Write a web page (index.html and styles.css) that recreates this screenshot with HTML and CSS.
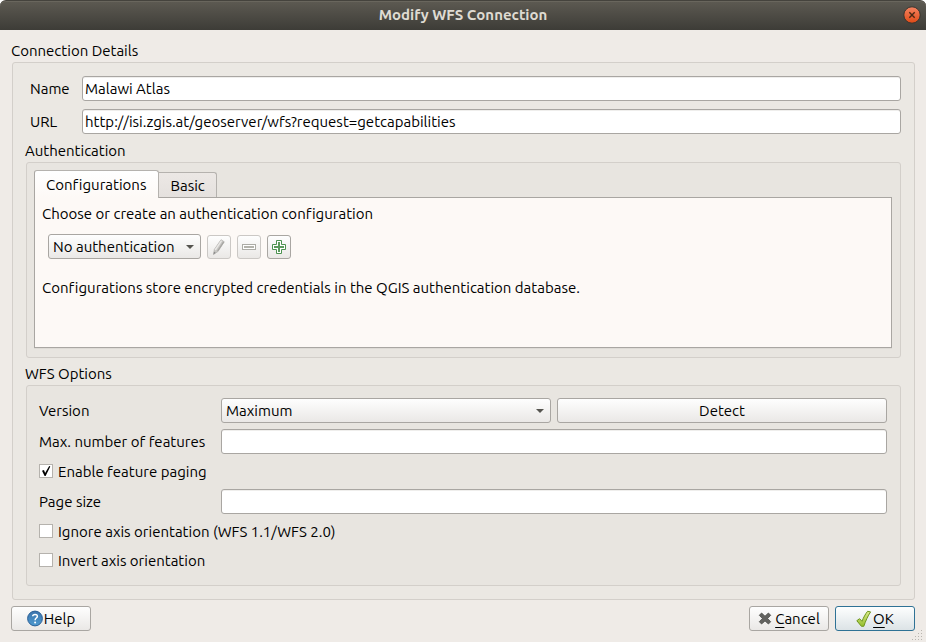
FILE: index.html
```html
<!DOCTYPE html>
<html lang="en">
<head>
<meta charset="utf-8">
<title>Modify WFS Connection</title>
<link rel="stylesheet" href="styles.css">
</head>
<body>
<div class="window">
  <header class="titlebar">
    <h1 class="title">Modify WFS Connection</h1>
    <button class="close" type="button" aria-label="Close">
      <svg width="18" height="18" viewBox="0 0 18 18" aria-hidden="true">
        <defs><linearGradient id="closeFill" x1="0" y1="0" x2="0" y2="1"><stop offset="0" stop-color="#f58462"/><stop offset="1" stop-color="#df4a16"/></linearGradient></defs>
        <circle cx="9" cy="9" r="8.2" fill="url(#closeFill)" stroke="#37352f" stroke-width="1"/>
        <path d="M6.3 6.3l5.4 5.4M11.7 6.3l-5.4 5.4" stroke="#4a2814" stroke-width="1.4"/>
      </svg>
    </button>
  </header>
  <form class="main">
    <h2 class="legend">Connection Details</h2>
    <section class="group outer">
      <div class="fields">
        <label for="name">Name</label>
        <input class="text" id="name" type="text" value="Malawi Atlas">
        <label for="url">URL</label>
        <input class="text" id="url" type="text" value="http://isi.zgis.at/geoserver/wfs?request=getcapabilities">
      </div>

      <h2 class="legend inner-legend">Authentication</h2>
      <section class="group auth">
        <div class="tabs" role="tablist">
          <button class="tab active" type="button" role="tab" aria-selected="true">Configurations</button>
          <button class="tab" type="button" role="tab" aria-selected="false">Basic</button>
        </div>
        <div class="pane" role="tabpanel">
          <label class="pane-text" for="config">Choose or create an authentication configuration</label>
          <div class="tools">
            <span class="combo">
              <select id="config"><option>No authentication</option></select>
            </span>
            <button class="button tool" type="button" aria-label="Edit" disabled>
              <svg width="16" height="18" viewBox="0 0 16 18" aria-hidden="true">
                <path d="M2.5 16.5l.8-5L10 1.7l3.3 2.1-6.4 9.8z" fill="#c6c5c2" stroke="#b0afac" stroke-width=".7"/>
                <path d="M4.2 12L10.6 2.6" stroke="#e9e8e6" stroke-width="1.4"/>
                <path d="M6.6 13L12.6 4" stroke="#a5a4a1" stroke-width="1.2"/>
                <path d="M2.5 16.5l.5-2.8 1.7 1.1z" fill="#888"/>
              </svg>
            </button>
            <button class="button tool" type="button" aria-label="Remove" disabled>
              <svg width="16" height="16" viewBox="0 0 16 16" aria-hidden="true">
                <rect x="1.5" y="5.5" width="13" height="5" fill="#fff" stroke="#acaca6"/>
                <rect x="3" y="7" width="10" height="2" fill="#b3b3ac"/>
              </svg>
            </button>
            <button class="button tool" type="button" aria-label="Add">
              <svg width="16" height="16" viewBox="0 0 16 16" aria-hidden="true">
                <path d="M5.5 1.5h5v4h4v5h-4v4h-5v-4h-4v-5h4z" fill="#fff" stroke="#4c9250"/>
                <path d="M7 3h2v4h4v2H9v4H7V9H3V7h4z" fill="#5a9a5c"/>
              </svg>
            </button>
          </div>
          <p class="pane-text">Configurations store encrypted credentials in the QGIS authentication database.</p>
        </div>
      </section>

      <h2 class="legend inner-legend">WFS Options</h2>
      <section class="group options">
        <label for="version">Version</label>
        <div class="pair">
          <span class="combo">
            <select id="version"><option>Maximum</option></select>
          </span>
          <button class="button" type="button">Detect</button>
        </div>
        <label for="max">Max. number of features</label>
        <input class="text" id="max" type="text">
        <label class="check">
          <span class="box"><input type="checkbox" checked><svg class="mark" width="14" height="14" viewBox="0 0 14 14" aria-hidden="true"><path d="M3 6.8l2-.7 1.1 2.8L10.2 2l1.1.4L6.6 12h-1z" fill="#000"/></svg></span>
          Enable feature paging
        </label>
        <label for="page">Page size</label>
        <input class="text" id="page" type="text">
        <label class="check">
          <span class="box"><input type="checkbox"></span>
          Ignore axis orientation (WFS 1.1/WFS 2.0)
        </label>
        <label class="check">
          <span class="box"><input type="checkbox"></span>
          Invert axis orientation
        </label>
      </section>
    </section>

    <footer class="footer">
      <button class="button action" type="button">
        <svg width="16" height="18" viewBox="0 0 16 18" aria-hidden="true">
          <defs><linearGradient id="helpFill" x1="0" y1="0" x2="0" y2="1"><stop offset="0" stop-color="#3f75ad"/><stop offset="1" stop-color="#4c9ad0"/></linearGradient></defs>
          <circle cx="8" cy="8.5" r="7.4" fill="url(#helpFill)" stroke="#2b5f96"/>
          <path d="M5.7 6.3C5.8 3.8 10.4 3.7 10.4 6.3c0 1.7-2.3 1.9-2.3 4" fill="none" stroke="#fff" stroke-width="1.5"/>
          <circle cx="8.1" cy="12.6" r="1" fill="#fff"/>
        </svg>
        <span>Help</span>
      </button>
      <span class="spacer"></span>
      <button class="button action cancel" type="button">
        <svg width="14" height="16" viewBox="0 0 14 16" aria-hidden="true">
          <path d="M3.6 2L7 5.2 10.4 2l2.3 2.3L9.6 7.5l3.1 3.2-2.3 2.3L7 9.9 3.6 13l-2.3-2.3 3.1-3.2-3.1-3.2z" fill="#62625f" stroke="#4a4b48" stroke-width=".8" stroke-linejoin="round"/>
        </svg>
        <span><u>C</u>ancel</span>
      </button>
      <button class="button action default" type="submit">
        <svg width="16" height="18" viewBox="0 0 16 18" aria-hidden="true">
          <defs><linearGradient id="okFill" x1="0" y1="0" x2="0" y2="1"><stop offset="0" stop-color="#dbeb8c"/><stop offset="1" stop-color="#94be2c"/></linearGradient></defs>
          <path d="M.8 10.7l2.8-2 2.4 2.6C7.5 7.6 9.3 4 11.6 1.3l3 .6C11.8 6 9.6 11 7.8 16.3H5.4z" fill="url(#okFill)" stroke="#6e961d" stroke-linejoin="round"/>
        </svg>
        <span><u>O</u>K</span>
      </button>
    </footer>
  </form>
  <svg class="grip" width="12" height="12" viewBox="0 0 12 12" aria-hidden="true">
    <path d="M9 1.5h1M9 4.5h1M6 4.5h1M9 7.5h1M6 7.5h1M3 7.5h1M9 10.5h1M6 10.5h1M3 10.5h1M0 10.5h1" stroke="#b9b5af" stroke-width="1"/>
  </svg>
</div>
</body>
</html>
```
FILE: styles.css
```css
* {
  box-sizing: border-box;
}

body {
  margin: 0;
  background: #fff;
  color: #000;
  font: 15px/20px Ubuntu, "Noto Sans", sans-serif;
  font-variant-ligatures: none;
}

button,
input,
select {
  margin: 0;
  color: inherit;
  font: inherit;
  font-variant-ligatures: none;
}

.window {
  position: relative;
  display: flex;
  flex-direction: column;
  min-height: 100vh;
  border-radius: 6px 6px 0 0;
  background: #efebe7;
}

.titlebar {
  display: grid;
  grid-template-columns: 18px 1fr 18px;
  align-items: center;
  height: 30px;
  padding: 0 5px 1px;
  border-top: 1px solid #45433d;
  border-radius: 6px 6px 0 0;
  background: linear-gradient(#5d5a52, #3d3c37);
  box-shadow: inset 0 1px #69665d;
}

.title {
  grid-column: 2;
  margin: 0;
  color: #dfdbd2;
  font-size: 15px;
  font-weight: 700;
  text-align: center;
}

.close {
  display: flex;
  padding: 0;
  border: 0;
  background: none;
}

.main {
  display: flex;
  flex: 1;
  flex-direction: column;
  padding: 11px;
}

.legend {
  margin: 0 0 1px;
  font-size: 15px;
  font-weight: 400;
  line-height: 20px;
}

.inner-legend {
  margin: 6px 0 1px -1px;
}

.group {
  border: 1px solid #d3cfca;
  border-radius: 3px;
}

.outer {
  display: flex;
  flex: 1;
  flex-direction: column;
  margin-left: 1px;
  padding: 13px;
  background: #ebe8e3;
}

.fields {
  display: grid;
  grid-template-columns: 52px 1fr;
  align-items: center;
  gap: 8px 0;
  padding: 0 0 1px 4px;
}

.text {
  width: 100%;
  height: 25px;
  padding: 0 2px;
  border: 1px solid #a9a6a2;
  border-radius: 3px;
  background: #fff;
  box-shadow: inset 0 1px #efeeec;
}

.auth {
  display: flex;
  flex: 1;
  flex-direction: column;
  padding: 7px 8px 9px 7px;
  background: #e8e5e0;
}

.tabs {
  display: flex;
  align-items: flex-end;
}

.tab {
  height: 25px;
  padding: 1px 11px 0;
  border: 1px solid #b5b2ae;
  border-bottom: 0;
  border-left: 0;
  border-radius: 0 3px 0 0;
  background: linear-gradient(#ece8e5, #e5e1de);
}

.tab.active {
  z-index: 1;
  height: 28px;
  margin-bottom: -1px;
  padding: 0 12px 0 11px;
  border-left: 1px solid #a9a6a2;
  border-radius: 3px 3px 0 0;
  background: linear-gradient(#fff, #fdf9f6);
}

.pane {
  flex: 1;
  padding: 6px 7px;
  border: 1px solid #a9a6a2;
  background: #fdf9f6;
  box-shadow: 0 1px #dedbd6;
}

.pane-text {
  display: block;
  margin: 0;
}

.tools {
  display: flex;
  align-items: center;
  gap: 6px;
  margin: 10px 0 19px;
  padding-left: 6px;
}

.button,
.combo select {
  height: 25px;
  border: 1px solid #a9a6a2;
  border-radius: 3px;
  background: linear-gradient(#fefefe, #eae8e6);
}

.button {
  display: flex;
  align-items: center;
  justify-content: center;
  padding: 0;
}

.button:disabled {
  border-color: #cbc8c5;
}

.tool {
  width: 24px;
  height: 24px;
}

.combo {
  position: relative;
  display: flex;
}

.combo select {
  width: 100%;
  padding: 0 25px 0 4px;
  appearance: none;
}

.combo::after {
  position: absolute;
  top: 11px;
  right: 7px;
  border: 4px solid transparent;
  border-top-color: #55544f;
  border-bottom: 0;
  content: "";
  pointer-events: none;
}

.options {
  display: grid;
  grid-template-columns: 182px 1fr;
  align-items: center;
  gap: 6px 0;
  padding: 12px 13px 13px 12px;
  background: #e8e5e0;
}

.pair {
  display: grid;
  grid-template-columns: 1fr 1fr;
  gap: 6px;
}

.check {
  display: flex;
  grid-column: 1 / -1;
  align-items: center;
  gap: 5px;
  height: 23px;
}

.box {
  display: grid;
  width: 14px;
  height: 14px;
  margin-bottom: 1px;
}

.box input {
  grid-area: 1 / 1;
  width: 14px;
  height: 14px;
  border: 1px solid #b5b2ad;
  background: #fff;
  appearance: none;
}

.mark {
  z-index: 1;
  grid-area: 1 / 1;
  pointer-events: none;
}

.footer {
  display: flex;
  gap: 6px;
  margin-top: 6px;
}

.spacer {
  flex: 1;
}

.action {
  gap: 1px;
  width: 80px;
}

.cancel {
  gap: 3px;
}

.default {
  border-color: #2f7295;
  background: linear-gradient(#fdfefe, #dce3e6);
}

u {
  text-underline-offset: 3px;
}

.grip {
  position: absolute;
  right: 2px;
  bottom: 1px;
}
```
